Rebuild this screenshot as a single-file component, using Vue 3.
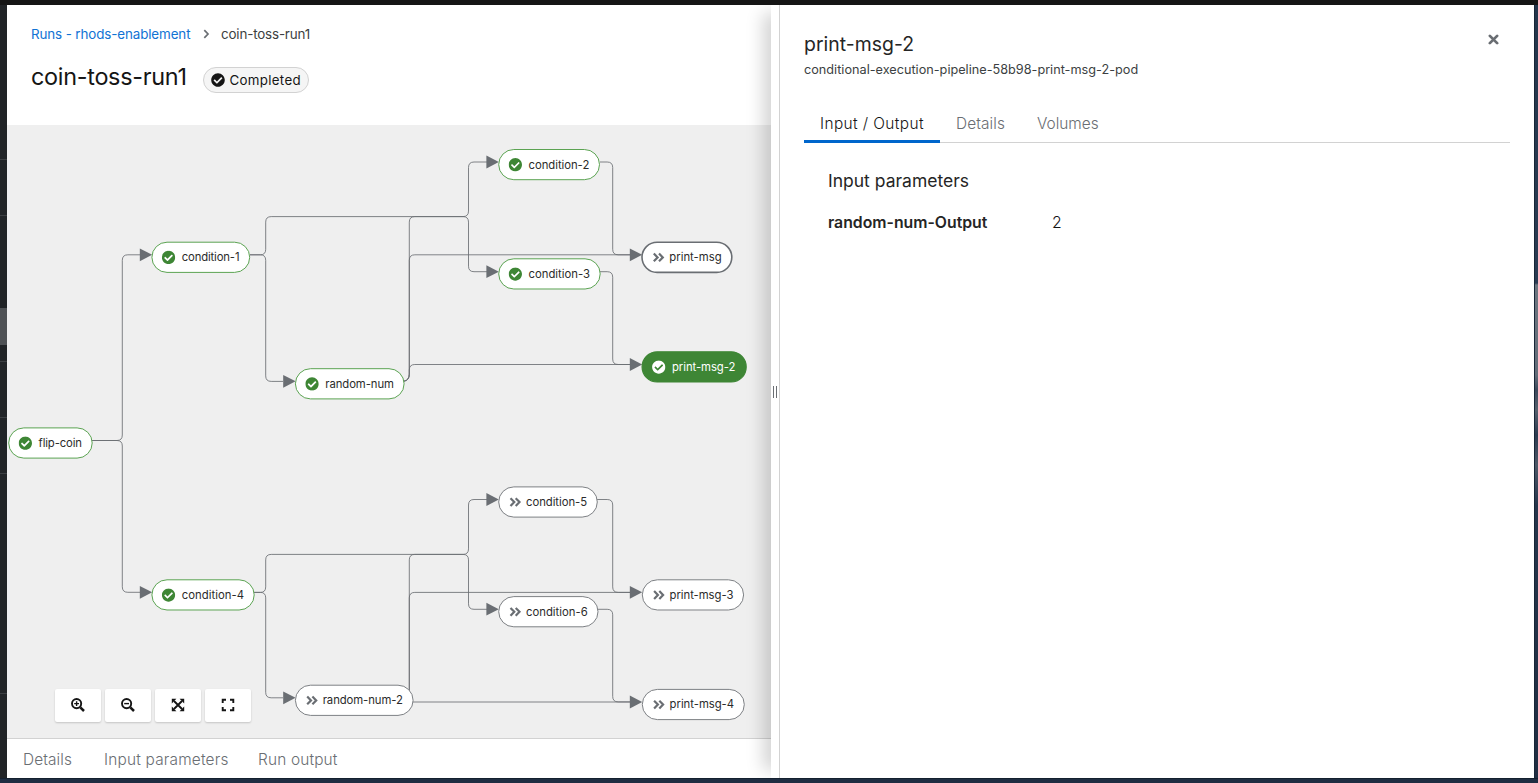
<script setup>
const nodes = [
  { label: 'flip-coin', x: 8.2, y: 427.4, w: 84.5, ok: true },
  { label: 'condition-1', x: 151.4, y: 241.7, w: 98.8, ok: true },
  { label: 'random-num', x: 294.9, y: 368.2, w: 109.7, ok: true },
  { label: 'condition-2', x: 498.2, y: 149, w: 101.8, ok: true },
  { label: 'condition-3', x: 498.2, y: 258.3, w: 102.5, ok: true },
  { label: 'print-msg', x: 641.5, y: 241.7, w: 90.8, hover: true },
  { label: 'print-msg-2', x: 641.6, y: 351.3, w: 105.1, ok: true, selected: true },
  { label: 'condition-4', x: 151.4, y: 579.3, w: 103.3, ok: true },
  { label: 'random-num-2', x: 294.9, y: 684.7, w: 118.7 },
  { label: 'condition-5', x: 498.2, y: 486.4, w: 99.6 },
  { label: 'condition-6', x: 498.2, y: 596.1, w: 100.3 },
  { label: 'print-msg-3', x: 641.8, y: 579.3, w: 102.3 },
  { label: 'print-msg-4', x: 641.8, y: 688.9, w: 103 }
]

const textOffset = n => (n.ok ? 30.4 : 27.8)
const textWidth = n => n.w - textOffset(n) - (n.selected ? 11.4 : 10.7)

const edges = [
  'M92 440.5H117q5.3 0 5.3-5.5V260.3q0-5.5 5.5-5.5H140',
  'M92 440.5H117q5.3 0 5.3 5.5V586.8q0 5.5 5.5 5.5H140',
  'M250 254.8H260.4q5.3 0 5.3-5.5V222.1q0-5.5 5.5-5.5H463q5.5 0 5.5-5.5V167.5q0-5.5 5.5-5.5H487',
  'M250 254.8H260.4q5.3 0 5.3 5.5V375.9q0 5.5 5.5 5.5H283',
  'M404 381.2q5.3-1 5.3-7V222.1q0-5.5 5.5-5.5H463q5.5 0 5.5 5.5V266.2q0 5.5 5.5 5.5H487',
  'M404 381.2q5.3-1 5.3-7V260.3q0-5.5 5.5-5.5H630',
  'M404 381.2q5.3-1 5.3-7V370q0-5.5 5.5-5.5H630',
  'M600 162H607.2q5.5 0 5.5 5.5V249.3q0 5.5 5.5 5.5H630',
  'M600 271.7H607.2q5.5 0 5.5 5.5V359q0 5.5 5.5 5.5H630',
  'M254 592.4H260.4q5.3 0 5.3-5.5V559.9q0-5.5 5.5-5.5H463q5.5 0 5.5-5.5V505q0-5.5 5.5-5.5H487',
  'M254 592.4H260.4q5.3 0 5.3 5.5V692.3q0 5.5 5.5 5.5H283',
  'M409.3 700V559.9q0-5.5 5.5-5.5H463q5.5 0 5.5 5.5V603.8q0 5.5 5.5 5.5H487',
  'M409.3 700V597.9q0-5.5 5.5-5.5H630',
  'M404 702H630',
  'M597 499.5H607.2q5.5 0 5.5 5.5V586.9q0 5.5 5.5 5.5H630',
  'M597 609.3H607.2q5.5 0 5.5 5.5V696.4q0 5.5 5.5 5.5H630'
]

const arrows = [
  [139.8, 254.8], [139.8, 592.3], [283.2, 381.3], [283.2, 697.8],
  [486.4, 162], [486.4, 271.7], [486.4, 499.5], [486.4, 609.2],
  [629.8, 254.8], [629.8, 364.5], [629.8, 592.3], [629.8, 702]
]

const check = 'M504 256c0 137-111 248-248 248S8 393 8 256 119 8 256 8s248 111 248 248zM227.3 387.3l184-184c6.2-6.2 6.2-16.4 0-22.6l-22.6-22.6c-6.2-6.2-16.4-6.2-22.6 0L216 308.1l-70.1-70.1c-6.2-6.2-16.4-6.2-22.6 0l-22.6 22.6c-6.2 6.2-6.2 16.4 0 22.6l104 104c6.2 6.3 16.4 6.3 22.6.1z'
</script>

<template>
  <div class="screen">
    <div class="masthead"></div>
    <div class="body">
      <nav class="rail">
        <i v-for="n in 6" :key="n" :class="['rule', 'r' + n]"></i>
        <i class="current"></i>
      </nav>

      <main class="run">
        <header class="head">
          <div class="crumbs">
            <a>Runs - rhods-enablement</a>
            <svg class="chev" viewBox="0 0 7 10"><path d="M1.300 1.200L5 5L1.300 8.800" /></svg>
            <span class="here">coin-toss-run1</span>
          </div>
          <div class="titlebar">
            <h1>coin-toss-run1</h1>
            <span class="badge">
              <svg viewBox="0 0 512 512"><path :d="check" /></svg>
              <span>Completed</span>
            </span>
          </div>
        </header>

        <section class="canvas">
          <svg class="graph" viewBox="7 125 764 613">
            <path v-for="(d, i) in edges" :key="'e' + i" :d="d" class="edge" />
            <path v-for="(a, i) in arrows" :key="'a' + i" :d="`M${a[0]} ${a[1] - 6.4}l12.4 6.4l-12.4 6.4z`" class="arrow" />
            <g v-for="n in nodes" :key="n.label" :transform="`translate(${n.x} ${n.y})`"
               :class="['node', { ok: n.ok, selected: n.selected, hover: n.hover }]">
              <rect x=".5" y=".5" :width="n.w - 1" height="30.2" rx="15.1" />
              <svg v-if="n.ok" x="10.3" y="8.9" width="13.7" height="13.7" viewBox="0 0 512 512"><path :d="check" class="glyph" /></svg>
              <path v-else class="skip" d="M12.300 11.800l3.800 3.900l-3.800 3.900M17.500 11.800l3.800 3.900l-3.800 3.900" />
              <text :x="textOffset(n)" y="19.500" :textLength="textWidth(n)">{{ n.label }}</text>
            </g>
          </svg>

          <div class="tools">
            <button><svg viewBox="0 0 14 14"><circle cx="5.600" cy="5.600" r="4.600" /><path d="M9.300 9.300L13 13" class="thick" /><path d="M3.200 5.600h4.800M5.600 3.200v4.800" class="thin" /></svg></button>
            <button><svg viewBox="0 0 14 14"><circle cx="5.600" cy="5.600" r="4.600" /><path d="M9.300 9.300L13 13" class="thick" /><path d="M3.200 5.600h4.800" class="thin" /></svg></button>
            <button><svg viewBox="0 0 14 14"><path d="M3 3l8 8M11 3l-8 8" /><path class="solid" d="M.8.800h4.600L.8 5.400zM13.200.800v4.600L8.600.800zM.8 13.200V8.600l4.600 4.600zM13.200 13.200H8.600l4.600-4.600z" /></svg></button>
            <button><svg viewBox="0 0 14 14"><path d="M1.700 5V1.700H5M9 1.700h3.300V5M12.300 9v3.300H9M5 12.300H1.700V9" /></svg></button>
          </div>
        </section>

        <footer class="foot">
          <span class="details">Details</span>
          <span class="params">Input parameters</span>
          <span class="output">Run output</span>
        </footer>
      </main>

      <aside class="drawer">
        <div class="splitter"><i></i><i></i></div>
        <div class="panel">
          <div class="panel-head">
            <div>
              <h2>print-msg-2</h2>
              <p class="pod">conditional-execution-pipeline-58b98-print-msg-2-pod</p>
            </div>
            <svg class="close" viewBox="0 0 10 10"><path d="M1.700 1.700l6.600 6.600M8.300 1.700L1.700 8.300" /></svg>
          </div>
          <div class="tabs">
            <span class="tab active">Input / Output</span>
            <span class="tab details">Details</span>
            <span class="tab volumes">Volumes</span>
          </div>
          <div class="content">
            <h3>Input parameters</h3>
            <dl><dt>random-num-Output</dt><dd>2</dd></dl>
          </div>
        </div>
      </aside>
      <div class="backdrop"></div>
    </div>
    <div class="bottom"></div>
  </div>
</template>

<style>
body { margin: 0; overflow: hidden; }
</style>

<style scoped>
* { box-sizing: border-box; }
.screen { width: 1538px; height: 783px; display: flex; flex-direction: column; font-family: "Inter", "Liberation Sans", sans-serif; color: #151515; overflow: hidden; white-space: nowrap; }
.masthead { height: 5px; background: #151515; }
.body { height: 773px; display: flex; }
.bottom { height: 5px; background: #1f2d42; border-top: 1px solid #14202f; }
.rail { position: relative; width: 7px; background: #212427; }
.rule { position: absolute; left: 0; width: 7px; height: 1px; background: #3c3f42; }
.r1 { top: 154px; }
.r2 { top: 210px; }
.r3 { top: 356px; }
.r4 { top: 412px; }
.r5 { top: 468px; }
.r6 { top: 688px; }
.current { position: absolute; left: 0; top: 303px; width: 7px; height: 37px; background: #4f5255; }
.run { width: 764px; display: flex; flex-direction: column; }
.head { height: 120px; background: #fff; padding: 20px 24px 0; }
.crumbs { display: flex; align-items: center; height: 18px; font-size: 13.4px; }
.crumbs a { width: 172px; color: #1173d4; letter-spacing: -.12px; }
.chev { width: 7px; height: 10px; margin-right: 11px; fill: none; stroke: #6a6e73; stroke-width: 1.7; }
.here { color: #3c3f42; letter-spacing: -.17px; }
.titlebar { display: flex; margin-top: 19px; }
h1, h2, h3, p, dl, dd { margin: 0; font-weight: 400; }
h1 { width: 172px; font-size: 23.4px; line-height: 30px; letter-spacing: -.28px; }
.badge { display: flex; align-items: center; width: 106px; height: 26px; margin-top: 5px; padding-left: 7px; border: 1px solid #d2d2d2; border-radius: 13px; background: #f5f5f5; font-size: 13.3px; letter-spacing: .32px; }
.badge svg { width: 14px; height: 14px; margin-right: 4.5px; fill: #151515; }
.canvas { position: relative; height: 613px; background: #efefef; }
.graph { display: block; width: 764px; height: 613px; }
.edge { fill: none; stroke: #6a6e73; stroke-width: .85; }
.arrow { fill: #6a6e73; }
.node rect { fill: #fff; stroke: #7d8084; stroke-width: 1; }
.node.ok rect { stroke: #5ba352; }
.node.hover rect { stroke: #6a6e73; stroke-width: 1.6; }
.node.selected rect { fill: #3e8635; stroke: #3e8635; stroke-width: 1.2; }
.node text { font-size: 11.3px; fill: #2b2b2b; }
.node.selected text, .node.selected .glyph { fill: #fff; }
.glyph { fill: #3e8635; }
.skip { fill: none; stroke: #6a6e73; stroke-width: 2.2; }
.tools { position: absolute; left: 48px; top: 564px; display: flex; gap: 4px; }
.tools button { display: flex; align-items: center; justify-content: center; width: 46px; height: 33px; padding: 0 0 1px; border: 0; border-radius: 2px; background: #fff; box-shadow: 0 1px 2px rgba(3, 3, 3, .18); }
.tools svg { width: 14px; height: 14px; fill: none; stroke: #151515; stroke-width: 1.9; }
.tools .thick { stroke-width: 2.5; }
.tools .thin { stroke-width: 1.4; }
.tools .solid { fill: #151515; stroke: none; }
.foot { display: flex; align-items: center; gap: 32px; height: 40px; padding: 2px 16px 0; border-top: 1px solid #d2d2d2; background: #fff; color: #6a6e73; font-size: 15.4px; font-weight: 300; }
.foot .details { width: 49px; letter-spacing: .12px; }
.foot .params { width: 122px; letter-spacing: .2px; }
.foot .output { letter-spacing: .17px; }
.drawer { position: relative; width: 763px; display: flex; background: #fff; box-shadow: -16px 0 16px -8px rgba(3, 3, 3, .17); clip-path: inset(0 0 0 -40px); }
.splitter { width: 9px; display: flex; align-items: center; justify-content: center; gap: 2px; border-right: 1px solid #d2d2d2; padding-right: 1px; }
.splitter i { width: 1px; height: 12px; background: #6a6e73; }
.panel { width: 754px; padding: 26px 24px 0; }
.panel-head { display: flex; justify-content: space-between; height: 74px; }
h2 { font-size: 19.4px; line-height: 26px; letter-spacing: .04px; }
.pod { margin-top: 4px; font-size: 12.7px; line-height: 18px; color: #3c3f42; }
.close { width: 11px; height: 11px; margin: 2.5px 11px 0 0; fill: none; stroke: #6a6e73; stroke-width: 2.5; stroke-linecap: round; }
.tabs { display: flex; height: 38px; border-bottom: 1px solid #d2d2d2; font-size: 15.4px; line-height: 38px; font-weight: 300; }
.tab { height: 38px; padding: 0 16px; color: #6a6e73; }
.tab.active { width: 136px; border-bottom: 3px solid #06c; color: #151515; letter-spacing: .4px; }
.tab.details { width: 81px; letter-spacing: .12px; }
.tab.volumes { letter-spacing: 0; }
.content { padding: 26px 24px 0; }
h3 { font-size: 17.5px; line-height: 24px; }
dl { display: flex; margin-top: 18px; font-size: 15.8px; line-height: 23px; }
dt { width: 224px; font-weight: 600; }
dd { font-weight: 300; }
dt, h3, h2 { color: #252525; }
.backdrop { width: 4px; background: linear-gradient(#23364c 0, #2a3c53 278px, #6c7680 280px, #626d79 370px, #3b495c 385px, #56616e 405px, #2b3b50 430px, #4d5968 460px, #25364c 500px, #1f2d42 773px); border-left: 1px solid #182637; }
</style>
